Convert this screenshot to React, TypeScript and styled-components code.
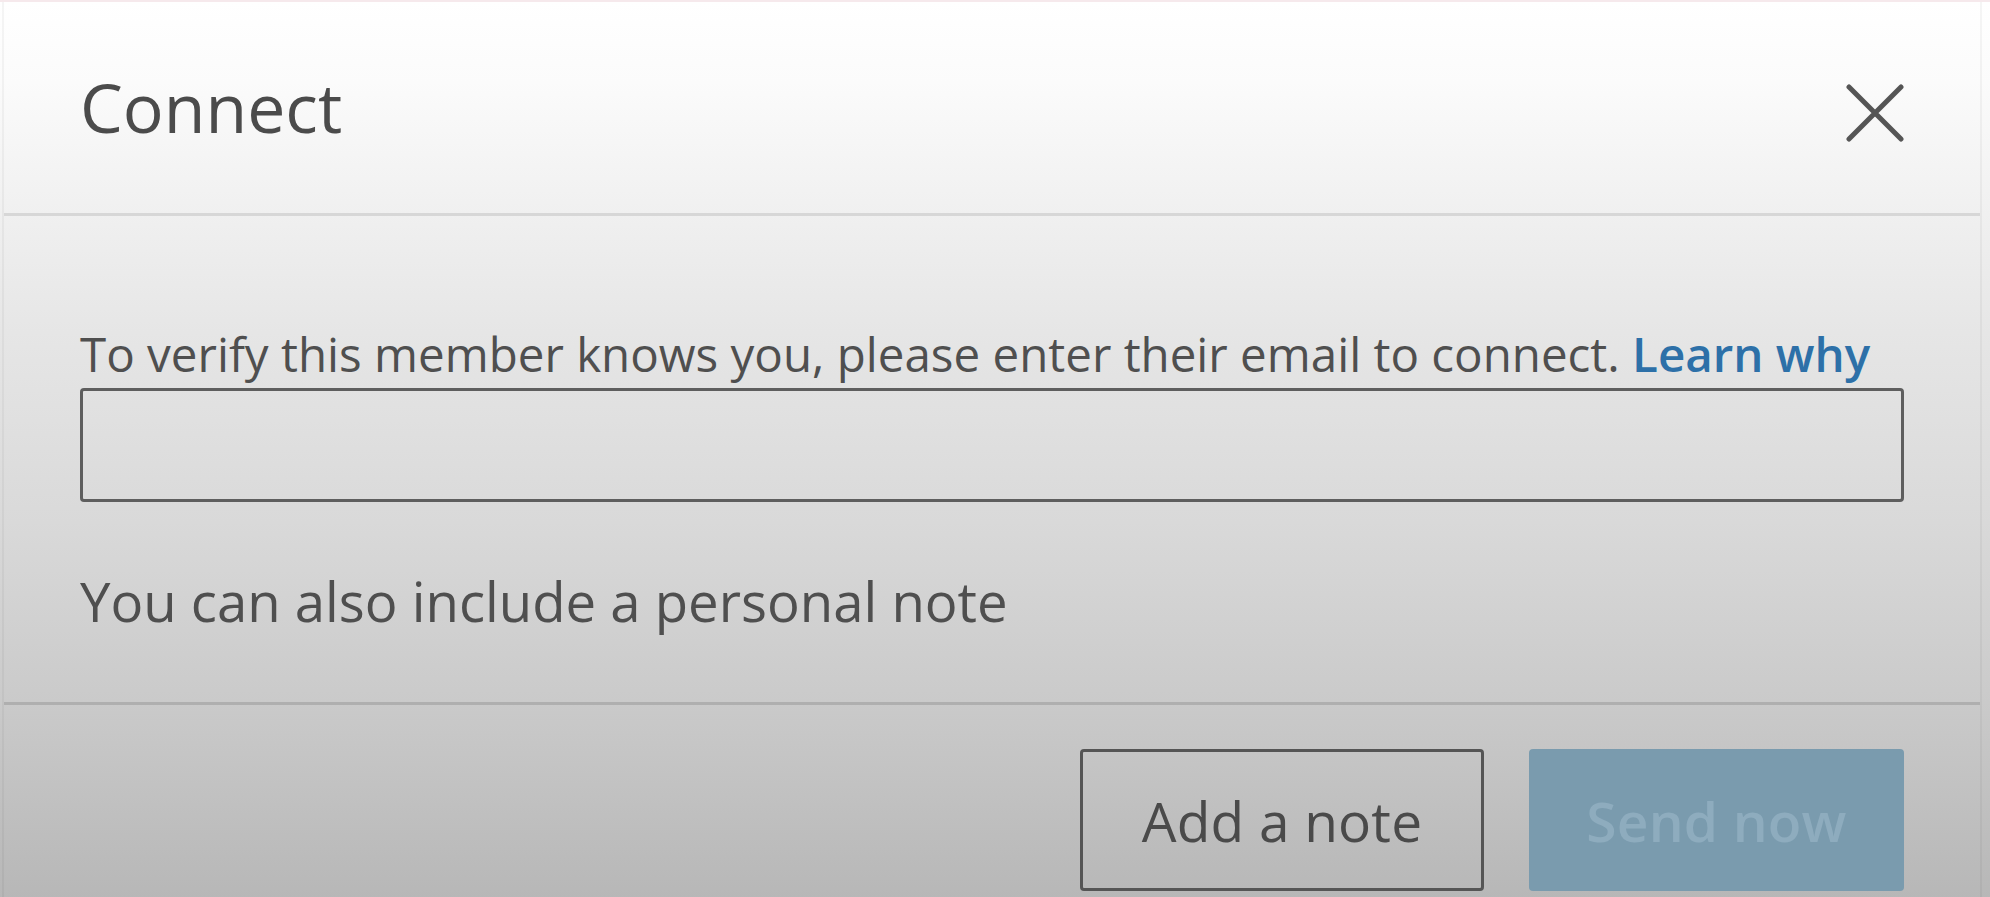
import styled, { createGlobalStyle } from 'styled-components';

const GlobalStyle = createGlobalStyle`
  html, body {
    margin: 0;
    padding: 0;
  }
  body {
    font-family: "Open Sans", "Noto Sans", sans-serif;
    background: #b8b8b8;
  }
`;

const Page = styled.div`
  width: 1990px;
  height: 897px;
  overflow: hidden;
  background: linear-gradient(
    to bottom,
    #ffffff 0px,
    #fbfbfb 80px,
    #f1f1f1 200px,
    #e6e6e6 330px,
    #d9d9d9 520px,
    #cacaca 700px,
    #b7b7b7 897px
  );
  border-top: 2px solid #f6e9ec;
  box-sizing: border-box;
`;

const Modal = styled.div`
  margin: 0 8px 0 2px;
  border-left: 2px solid rgba(0, 0, 0, 0.04);
  border-right: 2px solid rgba(0, 0, 0, 0.04);
  display: flex;
  flex-direction: column;
  height: 100%;
`;

const Header = styled.header`
  height: 211px;
  display: flex;
  align-items: center;
  justify-content: space-between;
  padding: 0 76px 0 76px;
  border-bottom: 3px solid rgba(0, 0, 0, 0.1);
`;

const Title = styled.h2`
  margin: 0;
  margin-top: -2px;
  font-size: 68px;
  font-weight: 400;
  color: #4b4b4b;
`;

const CloseButton = styled.button`
  border: none;
  background: none;
  padding: 0;
  width: 58px;
  height: 58px;
  display: flex;
  align-items: center;
  justify-content: center;
  cursor: pointer;
  margin-top: 10px;
`;

const Body = styled.div`
  padding: 108px 76px 0 76px;
  height: 489px;
  box-sizing: border-box;
  border-bottom: 3px solid rgba(0, 0, 0, 0.13);
`;

const Prompt = styled.p`
  margin: 0;
  font-size: 47.5px;
  line-height: 60px;
  color: #4f4f4f;
  white-space: nowrap;
`;

const LearnLink = styled.a`
  color: #2d70a8;
  font-weight: 600;
  text-decoration: none;
`;

const EmailInput = styled.input`
  display: block;
  box-sizing: border-box;
  width: 100%;
  height: 114px;
  margin-top: 4px;
  border: 3px solid #5e5e5e;
  border-radius: 4px;
  background: transparent;
  font-family: inherit;
  font-size: 44px;
  padding: 0 20px;
  outline: none;
`;

const Note = styled.p`
  margin: 67px 0 0;
  font-size: 54.5px;
  line-height: 64px;
  color: #4f4f4f;
`;

const Footer = styled.footer`
  flex: 1;
  display: flex;
  justify-content: flex-end;
  align-items: flex-start;
  gap: 45px;
  padding: 44px 76px 0 0;
`;

const Button = styled.button<{ primary?: boolean }>`
  box-sizing: border-box;
  height: 142px;
  width: ${p => (p.primary ? '375px' : '404px')};
  border-radius: 4px;
  font-family: inherit;
  font-size: 55px;
  font-weight: ${p => (p.primary ? 600 : 400)};
  letter-spacing: 0.2px;
  color: ${p => (p.primary ? '#8eacbe' : '#4a4a4a')};
  background: ${p => (p.primary ? '#7a9bae' : 'transparent')};
  border: ${p => (p.primary ? 'none' : '3px solid #555')};
  cursor: pointer;
`;

export default function App() {
  return (
    <>
      <GlobalStyle />
      <Page>
        <Modal>
          <Header>
            <Title>Connect</Title>
            <CloseButton aria-label="Dismiss">
              <svg width="58" height="58" viewBox="0 0 58 58">
                <path d="M3 3 L55 55 M55 3 L3 55" stroke="#555" strokeWidth="5" strokeLinecap="round" />
              </svg>
            </CloseButton>
          </Header>
          <Body>
            <Prompt>
              To verify this member knows you, please enter their email to connect.{' '}
              <LearnLink href="#">Learn why</LearnLink>
            </Prompt>
            <EmailInput type="email" />
            <Note>You can also include a personal note</Note>
          </Body>
          <Footer>
            <Button>Add a note</Button>
            <Button primary disabled>
              Send now
            </Button>
          </Footer>
        </Modal>
      </Page>
    </>
  );
}
